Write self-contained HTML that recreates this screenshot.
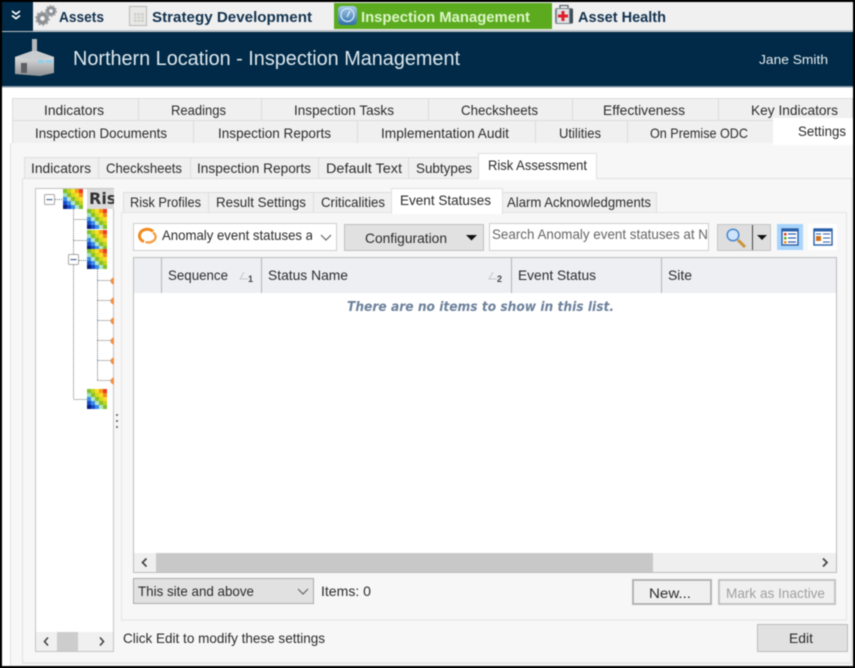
<!DOCTYPE html>
<html><head><meta charset="utf-8"><style>
html,body{margin:0;padding:0;background:#000;width:855px;height:668px;overflow:hidden}
svg{display:block;filter:blur(.4px)}
text{font-family:"Liberation Sans",sans-serif;font-size:14px;fill:#2b2b2b;white-space:pre}
.b{font-weight:bold;fill:#12324f;font-size:14.5px}
</style></head><body>
<svg width="855" height="668" viewBox="0 0 855 668" xmlns="http://www.w3.org/2000/svg">
<defs>
<symbol id="heat" viewBox="0 0 20 20">
<rect width="20" height="20" fill="#2a8be0"/>
<g shape-rendering="crispEdges">
<rect x="0" y="0" width="4" height="4" fill="#7fc02a"/><rect x="4" y="0" width="4" height="4" fill="#c4d41c"/><rect x="8" y="0" width="4" height="4" fill="#f6e12a"/><rect x="12" y="0" width="4" height="4" fill="#f79a1c"/><rect x="16" y="0" width="4" height="4" fill="#ee3a22"/>
<rect x="0" y="4" width="4" height="4" fill="#a4dcc0"/><rect x="4" y="4" width="4" height="4" fill="#86c226"/><rect x="8" y="4" width="4" height="4" fill="#d6d81e"/><rect x="12" y="4" width="4" height="4" fill="#f8dc28"/><rect x="16" y="4" width="4" height="4" fill="#f58a1c"/>
<rect x="0" y="8" width="4" height="4" fill="#3a8ee8"/><rect x="4" y="8" width="4" height="4" fill="#b4e4d0"/><rect x="8" y="8" width="4" height="4" fill="#86c226"/><rect x="12" y="8" width="4" height="4" fill="#d6d81e"/><rect x="16" y="8" width="4" height="4" fill="#f8dc28"/>
<rect x="0" y="12" width="4" height="4" fill="#1a4cc8"/><rect x="4" y="12" width="4" height="4" fill="#3a8ee8"/><rect x="8" y="12" width="4" height="4" fill="#b4e4d0"/><rect x="12" y="12" width="4" height="4" fill="#86c226"/><rect x="16" y="12" width="4" height="4" fill="#c4d41c"/>
<rect x="0" y="16" width="4" height="4" fill="#0a1f78"/><rect x="4" y="16" width="4" height="4" fill="#1a4cc8"/><rect x="8" y="16" width="4" height="4" fill="#3a8ee8"/><rect x="12" y="16" width="4" height="4" fill="#b4e4d0"/><rect x="16" y="16" width="4" height="4" fill="#7fc02a"/>
</g>
</symbol>
<symbol id="gear" viewBox="0 0 12 12">
<circle cx="6" cy="6" r="3.4" fill="none" stroke="#8c9094" stroke-width="3"/>
<circle cx="6" cy="6" r="5.100" fill="none" stroke="#a3a7aa" stroke-width="1.800" stroke-dasharray="1.700 1.500"/>
</symbol>
<symbol id="minus" viewBox="0 0 11 11">
<rect x=".5" y=".5" width="10" height="10" rx="1" fill="#fff" stroke="#a8a8a8"/>
<rect x="2.500" y="5" width="6" height="1.200" fill="#4a6a9a"/>
</symbol>
<clipPath id="treeclip"><rect x="36" y="189" width="78" height="443"/></clipPath>
<clipPath id="comboclip"><rect x="160" y="226" width="152" height="22"/></clipPath>
<linearGradient id="fw" x1="0" y1="0" x2="0" y2="1"><stop offset="0" stop-color="#f4f4f4"/><stop offset="1" stop-color="#8d9092"/></linearGradient>
<linearGradient id="gg" x1="0" y1="0" x2="0" y2="1"><stop offset="0" stop-color="#a9cdea"/><stop offset="1" stop-color="#2c6ea8"/></linearGradient>
</defs>

<rect width="855" height="668" fill="#000"/>
<rect x="2" y="2" width="851" height="664" fill="#fff"/>

<!-- top bar -->
<rect x="2" y="2" width="851" height="28" fill="#f0f0f0"/>
<rect x="2" y="30" width="851" height="2" fill="#b9c0c6"/>
<rect x="2" y="2" width="31" height="29" fill="#002a47"/>
<path d="M12 11l4 3 4-3M12 15.500l4 3 4-3" fill="none" stroke="#fff" stroke-width="1.700"/>
<use href="#gear" x="35" y="11" width="15" height="15"/>
<use href="#gear" x="45" y="5" width="12" height="12"/>
<text class="b" x="59" y="22" textLength="45" lengthAdjust="spacingAndGlyphs">Assets</text>
<rect x="129.500" y="6.500" width="17" height="19" fill="#e8e8e6" stroke="#b8b8b4"/>
<rect x="134" y="13" width="10" height="9" fill="#cfcfcb"/>
<path d="M134 16h10M134 19h10M137 13v9M140.500 13v9" stroke="#f0f0ee" stroke-width=".7"/>
<text class="b" x="152" y="22" textLength="160" lengthAdjust="spacingAndGlyphs">Strategy Development</text>
<rect x="334" y="3" width="218" height="26" fill="#5cab1e"/>
<rect x="338" y="6" width="19" height="19" rx="4" fill="url(#gg)"/>
<circle cx="347.500" cy="15" r="6.500" fill="none" stroke="#d4e6f5" stroke-width="1.300"/>
<path d="M347 17l3-6" stroke="#e8f2fa" stroke-width="1.200"/>
<text class="b" x="361" y="22" textLength="169" lengthAdjust="spacingAndGlyphs" style="fill:#dcf6c8">Inspection Management</text>
<rect x="555" y="8" width="18" height="16" rx="2" fill="#7c868d"/>
<path d="M560 8V5.500h8V8" fill="none" stroke="#5d656b" stroke-width="1.300"/>
<rect x="557" y="9" width="12" height="14" fill="#dfe2e4"/>
<rect x="561.500" y="11" width="3" height="10" fill="#e01f2a"/><rect x="558" y="14.500" width="10" height="3" fill="#e01f2a"/>
<rect x="570" y="9" width="3" height="14" fill="#3f4a55"/>
<text class="b" x="578" y="22" textLength="88" lengthAdjust="spacingAndGlyphs">Asset Health</text>

<!-- header -->
<rect x="2" y="32" width="851" height="54" fill="#002a47"/>
<rect x="2" y="86" width="851" height="1.500" fill="#8a9aa8"/>
<rect x="32" y="39" width="5" height="14" fill="#b5b9bc"/>
<path d="M15 57l17-6h5l17 6v16l-14 3-25-2z" fill="url(#fw)"/>
<path d="M15 57l17-6h5l17 6-17 3z" fill="#c9cdd0"/>
<rect x="21" y="63" width="6" height="10" fill="#5d6063"/>
<rect x="38" y="60" width="6" height="3" fill="#8fd0ee"/><rect x="46" y="60" width="6" height="3" fill="#8fd0ee"/>
<text x="73" y="65" textLength="387" lengthAdjust="spacingAndGlyphs" style="font-size:20px;fill:#dde7ee">Northern Location - Inspection Management</text>
<text x="759" y="64" textLength="69" lengthAdjust="spacingAndGlyphs" style="font-size:13px;fill:#e6ecf1">Jane Smith</text>

<!-- outer tabs -->
<rect x="12.500" y="98.500" width="840" height="22" fill="#f0f0f0" stroke="#dcdcdc"/>
<path d="M138.500 98v22M261.500 98v22M428.500 98v22M572.500 98v22M718.500 98v22" stroke="#dcdcdc"/>
<rect x="12.500" y="120.500" width="840" height="23" fill="#f0f0f0" stroke="#dcdcdc"/>
<path d="M193.500 120v23M357.500 120v23M535.500 120v23M627.500 120v23" stroke="#dcdcdc"/>
<text x="44" y="115" textLength="60" lengthAdjust="spacingAndGlyphs">Indicators</text>
<text x="171" y="115" textLength="55" lengthAdjust="spacingAndGlyphs">Readings</text>
<text x="294" y="115" textLength="100" lengthAdjust="spacingAndGlyphs">Inspection Tasks</text>
<text x="461" y="115" textLength="77" lengthAdjust="spacingAndGlyphs">Checksheets</text>
<text x="603" y="115" textLength="82" lengthAdjust="spacingAndGlyphs">Effectiveness</text>
<text x="751" y="115" textLength="87" lengthAdjust="spacingAndGlyphs">Key Indicators</text>
<text x="35" y="138" textLength="132" lengthAdjust="spacingAndGlyphs">Inspection Documents</text>
<text x="218" y="138" textLength="113" lengthAdjust="spacingAndGlyphs">Inspection Reports</text>
<text x="381" y="138" textLength="128" lengthAdjust="spacingAndGlyphs">Implementation Audit</text>
<text x="559" y="138" textLength="42" lengthAdjust="spacingAndGlyphs">Utilities</text>
<text x="650" y="138" textLength="98" lengthAdjust="spacingAndGlyphs">On Premise ODC</text>

<!-- outer panel -->
<rect x="10" y="143" width="843" height="523" fill="#f7f7f7"/>
<rect x="10" y="143" width="1" height="523" fill="#e2e2e2"/>
<rect x="773" y="118" width="80" height="27" fill="#fff"/>
<text x="798" y="136" textLength="48" lengthAdjust="spacingAndGlyphs">Settings</text>

<!-- inner tabs -->
<rect x="24.500" y="157.500" width="454" height="21" fill="#f0f0f0" stroke="#dedede"/>
<path d="M98.500 157v21M190.500 157v21M318.500 157v21M408.500 157v21" stroke="#dedede"/>
<text x="31" y="173" textLength="60" lengthAdjust="spacingAndGlyphs">Indicators</text>
<text x="106" y="173" textLength="76" lengthAdjust="spacingAndGlyphs">Checksheets</text>
<text x="197" y="173" textLength="114" lengthAdjust="spacingAndGlyphs">Inspection Reports</text>
<text x="326" y="173" textLength="76" lengthAdjust="spacingAndGlyphs">Default Text</text>
<text x="416" y="173" textLength="56" lengthAdjust="spacingAndGlyphs">Subtypes</text>
<rect x="22.500" y="178.500" width="829" height="484.500" fill="#f7f7f7" stroke="#e0e0e0"/>
<rect x="478.500" y="153.500" width="118" height="25" fill="#fff" stroke="#e0e0e0"/>
<rect x="479" y="177" width="117" height="3" fill="#fff"/>
<text x="488" y="170" textLength="99" lengthAdjust="spacingAndGlyphs">Risk Assessment</text>

<!-- tree -->
<rect x="35.500" y="188.500" width="78" height="463" fill="#fff" stroke="#c4c4c4"/>
<g clip-path="url(#treeclip)">
<rect x="87" y="189" width="27" height="20" fill="#dcdcdc"/>
<text x="89" y="204" style="font-weight:bold;font-size:16px;fill:#333;font-family:'DejaVu Sans',sans-serif">Ris</text>
<g stroke="#777" stroke-dasharray="1 1" fill="none">
<path d="M55 199.500h8M73.500 209v190M73.500 219.500h14M73.500 240.500h14M79 260.500h8M73.500 399.500h14M97.500 269v111M97.500 280.500h13M97.500 300.500h13M97.500 320.500h13M97.500 340.500h13M97.500 360.500h13M97.500 380.500h13"/>
</g>
<use href="#minus" x="44" y="194" width="11" height="11"/>
<use href="#minus" x="68" y="254" width="11" height="11"/>
<use href="#heat" x="63" y="189" width="20" height="20"/>
<use href="#heat" x="87" y="209" width="20" height="20"/>
<use href="#heat" x="87" y="230" width="20" height="20"/>
<use href="#heat" x="87" y="249" width="20" height="20"/>
<use href="#heat" x="87" y="389" width="20" height="20"/>
<g fill="#f0924a">
<circle cx="114" cy="281" r="3.500"/><circle cx="114" cy="301" r="3.500"/><circle cx="114" cy="321" r="3.500"/><circle cx="114" cy="341" r="3.500"/><circle cx="114" cy="361" r="3.500"/><circle cx="114" cy="381" r="3.500"/>
</g>
</g>
<rect x="36" y="632" width="77" height="19" fill="#f0f0f0"/>
<rect x="57" y="632" width="21" height="19" fill="#cdcdcd"/>
<path d="M48 637.500l-3.500 4 3.500 4M100 637.500l3.500 4-3.500 4" fill="none" stroke="#444" stroke-width="1.600"/>
<g fill="#777"><rect x="116" y="414" width="2" height="2"/><rect x="116" y="420" width="2" height="2"/><rect x="116" y="426" width="2" height="2"/></g>

<!-- third tabs -->
<rect x="123.500" y="192.500" width="268" height="20" fill="#f0f0f0" stroke="#dedede"/>
<path d="M208.500 192v20M313.500 192v20" stroke="#dedede"/>
<rect x="502.500" y="192.500" width="154" height="20" fill="#f0f0f0" stroke="#dedede"/>
<rect x="121.500" y="212.500" width="725" height="407.500" fill="#f7f7f7" stroke="#e4e4e4"/>
<rect x="391.500" y="188.500" width="111" height="25" fill="#fff" stroke="#e0e0e0"/>
<rect x="392" y="211" width="110" height="3" fill="#fff"/>
<text x="130" y="207" textLength="71" lengthAdjust="spacingAndGlyphs">Risk Profiles</text>
<text x="216" y="207" textLength="90" lengthAdjust="spacingAndGlyphs">Result Settings</text>
<text x="321" y="207" textLength="64" lengthAdjust="spacingAndGlyphs">Criticalities</text>
<text x="400" y="205" textLength="91" lengthAdjust="spacingAndGlyphs">Event Statuses</text>
<text x="507" y="207" textLength="144" lengthAdjust="spacingAndGlyphs">Alarm Acknowledgments</text>

<!-- toolbar -->
<rect x="133.500" y="223.500" width="203" height="27" fill="#fff" stroke="#cfcfcf"/>
<path d="M153 231.500C149 227.500 140 229 139.500 235.500C139.300 238 141 240.500 144 241.500" fill="none" stroke="#f08a1c" stroke-width="3"/>
<path d="M153 232.500C156.500 235 156.500 239 153 241C151 242.500 148 242.800 145.500 242" fill="none" stroke="#f4a04a" stroke-width="2.400"/>
<text x="162" y="240" clip-path="url(#comboclip)" textLength="151" lengthAdjust="spacingAndGlyphs">Anomaly event statuses a</text>
<path d="M321 235l5 5 5-5" fill="none" stroke="#666" stroke-width="1.200"/>
<rect x="344.500" y="224.500" width="139" height="26" fill="#e1e1e1" stroke="#c0c0c0"/>
<text x="365" y="243" textLength="82" lengthAdjust="spacingAndGlyphs">Configuration</text>
<path d="M466 235h11l-5.500 5.500z" fill="#111"/>
<rect x="489.500" y="223.500" width="219" height="27" fill="#fff" stroke="#cfcfcf"/>
<text x="492" y="239" textLength="216" lengthAdjust="spacingAndGlyphs" style="fill:#666">Search Anomaly event statuses at N</text>
<rect x="717.500" y="224.500" width="53" height="26" fill="#dedede" stroke="#c6c6c6"/>
<rect x="752" y="225" width="1" height="25" fill="#444"/>
<circle cx="733" cy="235" r="5.800" fill="#cfe4fa" stroke="#4a88d0" stroke-width="1.500"/>
<path d="M738 240l7 7" stroke="#c8913c" stroke-width="3"/>
<path d="M757 235h10l-5 5z" fill="#111"/>
<rect x="777" y="224" width="26" height="26" fill="#a9d4fb"/>
<rect x="782" y="229" width="16" height="16" fill="#fff" stroke="#2a5fa8" stroke-width="1.400"/>
<rect x="782" y="228.500" width="16" height="3" fill="#2a5fa8"/>
<rect x="784" y="233" width="2.500" height="2.500" fill="#d83a2a"/><rect x="784" y="237" width="2.500" height="2.500" fill="#5cab1e"/><rect x="784" y="241" width="2.500" height="2.500" fill="#ef8f1c"/>
<path d="M788 234h8M788 238h8M788 242h8" stroke="#2a5fa8" stroke-width="1.200"/>
<rect x="808" y="224" width="29" height="26" fill="#fff"/>
<rect x="814" y="229" width="18" height="16" fill="#fff" stroke="#2a5fa8" stroke-width="1.400"/>
<rect x="814" y="228.500" width="18" height="3" fill="#2a5fa8"/>
<rect x="816" y="236" width="5" height="5" fill="#d0701c"/>
<path d="M816 234h5M823 234h7M823 238h7M823 242h7" stroke="#2a5fa8" stroke-width="1.100"/>

<!-- grid -->
<rect x="133.500" y="257.500" width="703" height="315" fill="#fff" stroke="#bdbdbd"/>
<rect x="134" y="258" width="702" height="35" fill="#edeff3"/>
<path d="M161.500 258v35M261.500 258v35M511.500 258v35M661.500 258v35" stroke="#b4b4b4"/>
<text x="168" y="280" textLength="60" lengthAdjust="spacingAndGlyphs">Sequence</text>
<text x="268" y="280" textLength="80" lengthAdjust="spacingAndGlyphs">Status Name</text>
<text x="518" y="280" textLength="78" lengthAdjust="spacingAndGlyphs">Event Status</text>
<text x="668" y="280" textLength="24" lengthAdjust="spacingAndGlyphs">Site</text>
<path d="M244 272l-4 7h8" fill="none" stroke="#c8c8c8"/>
<path d="M493 272l-4 7h8" fill="none" stroke="#c8c8c8"/>
<text x="248" y="282" style="font-size:9px;font-weight:bold;fill:#444">1</text>
<text x="497" y="282" style="font-size:9px;font-weight:bold;fill:#444">2</text>
<text x="347" y="311" textLength="267" lengthAdjust="spacingAndGlyphs" style="font-family:'DejaVu Sans',sans-serif;font-size:13px;font-weight:bold;font-style:italic;fill:#6c809b">There are no items to show in this list.</text>
<rect x="134" y="553" width="702" height="19" fill="#efefef"/>
<rect x="156" y="553" width="497" height="19" fill="#c8c8c8"/>
<path d="M146.500 558.500l-4 4 4 4M823 558.500l4 4-4 4" fill="none" stroke="#444" stroke-width="1.700"/>

<!-- bottom controls -->
<rect x="133.500" y="578.500" width="180" height="25" fill="#e1e1e1" stroke="#aaa"/>
<text x="138" y="596" textLength="116" lengthAdjust="spacingAndGlyphs">This site and above</text>
<path d="M298 589l5 5 5-5" fill="none" stroke="#666" stroke-width="1.200"/>
<text x="321" y="596" textLength="50" lengthAdjust="spacingAndGlyphs">Items: 0</text>
<rect x="633" y="580" width="78" height="24" fill="#f0f0f0" stroke="#b4b4b4" stroke-width="2"/>
<text x="649" y="598" textLength="42" lengthAdjust="spacingAndGlyphs">New...</text>
<rect x="719" y="580" width="116" height="24" fill="#f0f0f0" stroke="#c4c4c4" stroke-width="2"/>
<text x="726" y="598" textLength="99" lengthAdjust="spacingAndGlyphs" style="fill:#a0a0a0">Mark as Inactive</text>
<text x="123" y="643" textLength="202" lengthAdjust="spacingAndGlyphs">Click Edit to modify these settings</text>
<rect x="757.500" y="624.500" width="90" height="27" fill="#e1e1e1" stroke="#bcbcbc"/>
<text x="789" y="643" textLength="24" lengthAdjust="spacingAndGlyphs">Edit</text>
</svg>
</body></html>
